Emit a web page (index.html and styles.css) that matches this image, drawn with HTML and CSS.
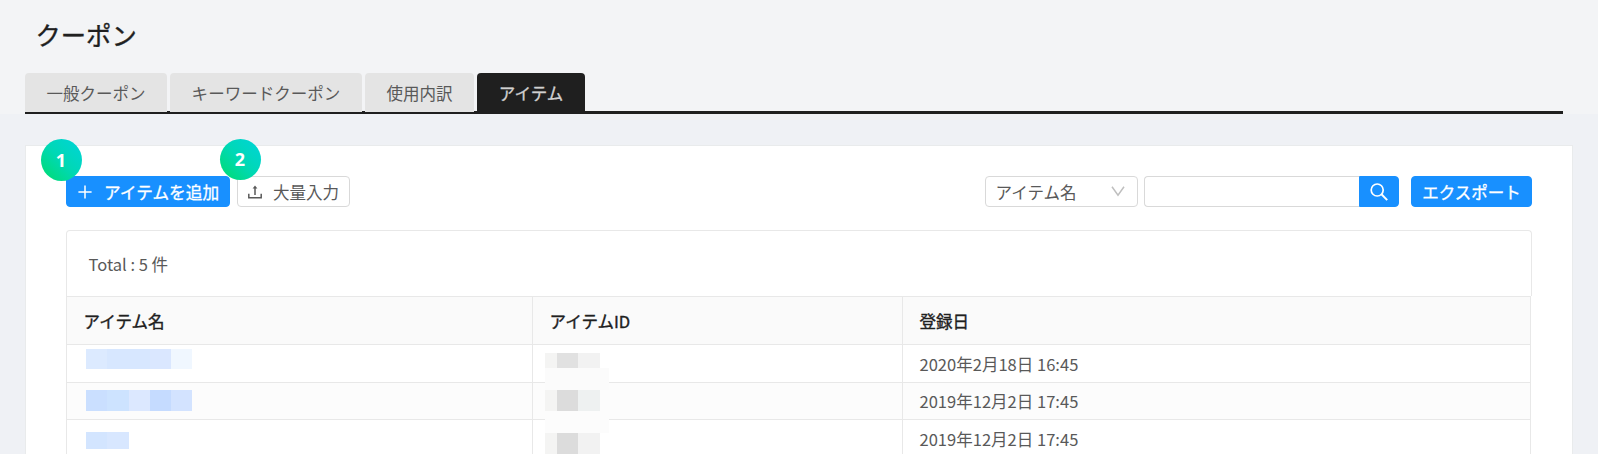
FILE: index.html
```html
<!DOCTYPE html>
<html lang="ja">
<head>
<meta charset="utf-8">
<title>クーポン</title>
<link rel="stylesheet" href="styles.css">
</head>
<body>
<header class="header">
  <h1 class="title">クーポン</h1>
  <nav class="tabs">
    <a class="tab tab-general">一般クーポン</a>
    <a class="tab tab-keyword">キーワードクーポン</a>
    <a class="tab tab-usage">使用内訳</a>
    <a class="tab tab-item active">アイテム</a>
  </nav>
</header>
<main class="panel">
  <div class="toolbar">
    <button class="btn primary add"><svg width="14" height="14" viewBox="0 0 14 14"><path d="M7 .4v13.2M.4 7h13.2" fill="none" stroke="currentColor" stroke-width="1.5"/></svg><span>アイテムを追加</span><i class="badge">1</i></button>
    <button class="btn bulk"><svg width="14" height="14" viewBox="0 0 14 14"><path d="M.8 8.7v4h12.4v-4M7 10V2" fill="none" stroke="currentColor" stroke-width="1.5"/><path d="M7 .4 4.6 3.6h4.8z" fill="currentColor"/></svg><span>大量入力</span><i class="badge second">2</i></button>
    <div class="select"><span>アイテム名</span><svg width="14" height="11" viewBox="0 0 14 11"><path d="M1 .8 7 9.3 13 .8" fill="none" stroke="currentColor" stroke-width="1.5"/></svg></div>
    <div class="search"><input class="field" type="text" aria-label="検索"><button class="btn primary go"><svg width="18" height="18" viewBox="0 0 18 18"><circle cx="7.2" cy="7" r="6" fill="none" stroke="currentColor" stroke-width="1.7"/><path d="m11.5 11.3 5.7 5.8" stroke="currentColor" stroke-width="2"/></svg></button></div>
    <button class="btn primary export">エクスポート</button>
  </div>
  <div class="total">Total : 5 件</div>
  <div class="table">
    <div class="row head"><div class="cell">アイテム名</div><div class="cell">アイテムID</div><div class="cell">登録日</div></div>
    <div class="row"><div class="cell"><div class="mosaic name-a"><b></b><b></b><b></b><b></b><b></b></div></div><div class="cell"><div class="mosaic id-a"><b></b><b></b><b></b></div></div><div class="cell">2020年2月18日 16:45</div></div>
    <div class="row even"><div class="cell"><div class="mosaic name-b"><b></b><b></b><b></b><b></b><b></b></div></div><div class="cell"><div class="mosaic id-b"><b></b><b></b><b></b></div></div><div class="cell">2019年12月2日 17:45</div></div>
    <div class="row"><div class="cell"><div class="mosaic name-c"><b></b><b></b></div></div><div class="cell"><div class="mosaic id-c"><b></b><b></b><b></b></div></div><div class="cell">2019年12月2日 17:45</div></div>
  </div>
</main>
</body>
</html>
```

FILE: styles.css
```css
* { box-sizing: border-box; }
html, body { height: 100%; overflow: hidden; }
body {
  margin: 0;
  background: #eff1f5;
  color: #595959;
  font: 16.55px/24px "Noto Sans CJK JP", sans-serif;
}
.header { height: 114px; padding: 16px 35px 0 25px; background: #f3f4f6; }
.title { margin: 0 0 21px; padding-left: 10.5px; font-size: 25.3px; line-height: 36px; font-weight: 400; -webkit-text-stroke: .35px; color: #202020; }
.tabs { display: flex; gap: 3px; height: 41px; background: linear-gradient(#1f1f1f, #1f1f1f) bottom / 100% 3px no-repeat; }
.tab { height: 39px; padding-top: 7.5px; text-align: center; background: #e4e4e4; border-radius: 4px 4px 0 0; white-space: nowrap; }
.tab-general { width: 142px; }
.tab-keyword { width: 192px; }
.tab-usage { width: 109px; }
.tab-item { width: 108px; }
.tab.active { background: #1f1f1f; color: #d0d0d0; -webkit-text-stroke: .3px; }

.panel { width: 1548px; height: 320px; margin: 31px 0 0 25px; padding: 30px 40px 0; border: 1px solid #e9ebec; background: #fff; }
.toolbar { display: flex; height: 31px; margin-bottom: 23px; }
.btn { position: relative; display: flex; align-items: center; height: 31px; padding: 0; border: 1px solid #d9d9d9; border-radius: 4px; background: #fff; color: #595959; font: inherit; white-space: nowrap; }
.btn span, .select span, .export { line-height: 22px; }
.btn.primary { border-color: #1890ff; background: #1890ff; color: #fff; -webkit-text-stroke: .3px; }
.add { width: 164px; padding-left: 11px; gap: 12px; font-size: 16.7px; }
.bulk { width: 113px; margin-left: 7px; padding-left: 10px; gap: 11px; }
.badge { position: absolute; left: -26px; top: -38px; width: 41px; height: 42px; border-radius: 50%; background: linear-gradient(45deg, #00dc73 5%, #00d8b5 50%, #00d5cf 85%); color: #fff; font: bold 18px/42px "Open Sans", sans-serif; text-align: center; padding-right: 1px; -webkit-text-stroke: 0; }
.badge.second { left: -18px; height: 41px; line-height: 41px; }
.select { display: flex; align-items: center; justify-content: space-between; width: 153px; margin-left: auto; padding: 0 12px 0 9.5px; border: 1px solid #d9d9d9; border-radius: 4px; }
.select svg { color: #bfbfbf; }
.search { display: flex; margin-left: 6px; }
.field { width: 215px; height: 31px; padding: 0 11px; border: 1px solid #d9d9d9; border-right: 0; border-radius: 4px 0 0 4px; outline: 0; font: inherit; }
.go { width: 40px; justify-content: center; border-radius: 0 4px 4px 0; }
.export { width: 121px; margin-left: 12px; justify-content: center; }

.total { height: 66px; padding: 21px 21.5px; border: 1px solid #e8e8e8; border-bottom: 0; border-radius: 4px 4px 0 0; }
.table { width: 1465px; border: 1px solid #e8e8e8; }
.row { display: grid; grid-template-columns: 466px 370px 1fr; height: 37.5px; border-bottom: 1px solid #e8e8e8; }
.row.even { background: #fcfcfc; }
.head { height: 48px; background: #fafafa; color: #202020; -webkit-text-stroke: .35px; }
.cell { position: relative; padding: 6.5px 16px 0 16.5px; border-right: 1px solid #e8e8e8; }
.head .cell { padding-top: 11.5px; }
.even .cell { padding-top: 6px; }
.cell:last-child { border-right: 0; }

/* Pixelated covers over private values */
.mosaic { position: absolute; left: 19px; display: flex; }
.mosaic b { width: 21.3px; }
.name-a { top: 4px; height: 20px; }
.name-a b { background: #d7e7ff; }
.name-a b:first-child { background: #dceaff; }
.name-a b:nth-child(4) { background: #dae7ff; }
.name-a b:nth-child(5) { background: #f0f7ff; }
.name-b { top: 7px; height: 21px; }
.name-b b { background: #cadfff; }
.name-b b:nth-child(2) { background: #cde3ff; }
.name-b b:nth-child(3) { background: #dce8ff; }
.name-b b:nth-child(4) { background: #c5dbff; }
.name-b b:nth-child(5) { background: #d3e3ff; }
.name-c { top: 12px; height: 17px; }
.name-c b { background: #d3e5ff; }
.name-c b:last-child { background: #d8e7ff; }
.id-a, .id-b, .id-c { left: 11.5px; width: 64px; background: #fcfcfc; }
.id-a b, .id-b b, .id-c b { height: 21px; background: #f2f2f2; }
.id-a b:first-child, .id-b b:first-child, .id-c b:first-child { width: 12.5px; background: #f4f4f3; }
.id-a b:nth-child(2), .id-b b:nth-child(2), .id-c b:nth-child(2) { background: #dcdcdc; }
.id-a { top: 8px; height: 37px; background: linear-gradient(#fff 15px, #fbfbfb 15px); z-index: 1; }
.id-a b { height: 15px; }
.id-a b:nth-child(2) { background: #e1e1e1; }
.id-b { top: 7px; height: 43px; z-index: 1; }
.id-b b:nth-child(3) { background: #eef1f1; }
.id-c { top: 13px; height: 22px; background: none; }
```
